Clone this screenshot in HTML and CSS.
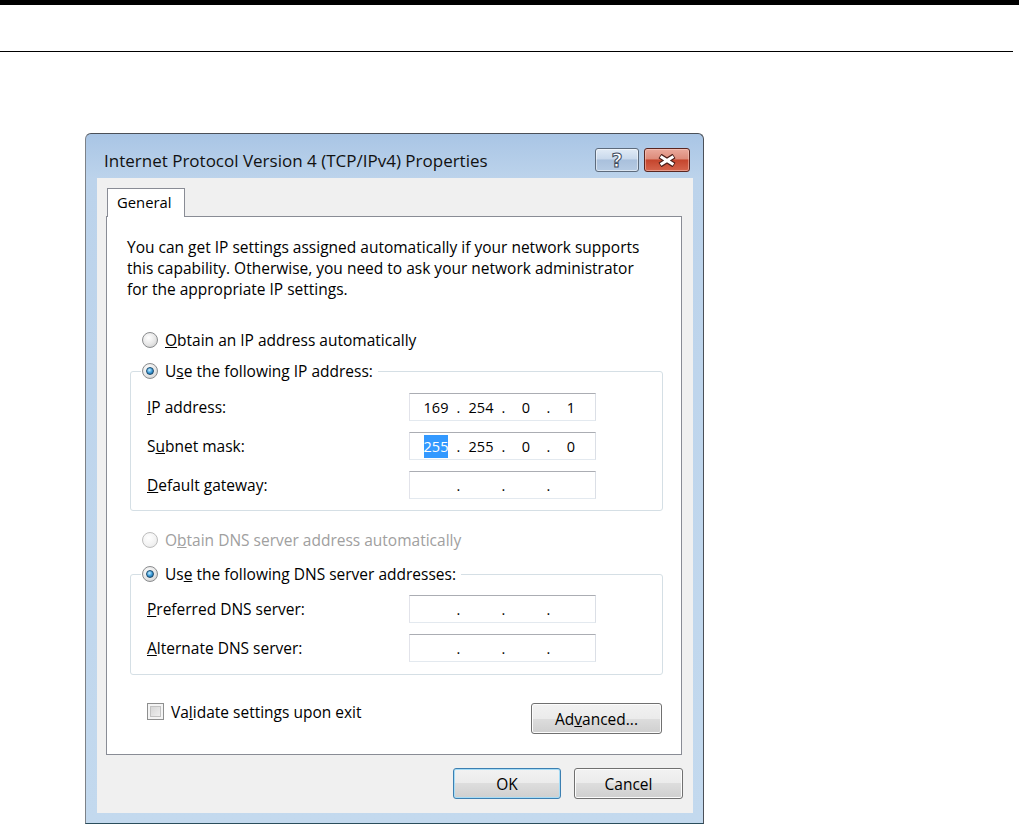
FILE: index.html
```html
<!DOCTYPE html>
<html lang="en">
<head>
    <meta charset="UTF-8">
    <title>Internet Protocol Version 4 (TCP/IPv4) Properties</title>
    <link rel="stylesheet" href="styles.css">
</head>
<body>

    <!-- Page header lines -->
    <div class="top-bar"></div>
    <div class="page-rule"></div>

    <!-- Dialog window -->
    <div class="window">
        <div class="title-bar">
            <span class="title">Internet Protocol Version 4 (TCP/IPv4) Properties</span>
            <div class="caption-btns">
                <button class="cap-btn help"><span class="help-mark">?</span></button>
                <button class="cap-btn close">
                    <svg width="20" height="13" viewBox="0 0 20 13">
                        <path d="M3 2 L17 11 M17 2 L3 11" stroke="#4a1d18" stroke-width="5.4" fill="none"/>
                        <path d="M3.6 2.4 L16.4 10.6 M16.4 2.4 L3.6 10.6" stroke="#fff" stroke-width="3" fill="none"/>
                    </svg>
                </button>
            </div>
        </div>

        <div class="client">
            <div class="tabs">
                <div class="tab">General</div>
            </div>

            <div class="panel">
                <p class="intro">You can get IP settings assigned automatically if your network supports<br>this capability. Otherwise, you need to ask your network administrator<br>for the appropriate IP settings.</p>

                <div class="option option-top"><span class="radio"></span><span><u>O</u>btain an IP address automatically</span></div>

                <!-- IP address group -->
                <fieldset class="group group-ip">
                    <legend><div class="option"><span class="radio checked"></span><span>U<u>s</u>e the following IP address:</span></div></legend>
                    <div class="fields">
                        <div class="field-row">
                            <label><u>I</u>P address:</label>
                            <div class="ip-box"><span class="seg">169</span><span class="dot">.</span><span class="seg">254</span><span class="dot">.</span><span class="seg">0</span><span class="dot">.</span><span class="seg">1</span></div>
                        </div>
                        <div class="field-row">
                            <label>S<u>u</u>bnet mask:</label>
                            <div class="ip-box"><span class="seg"><span class="selected">255</span></span><span class="dot">.</span><span class="seg">255</span><span class="dot">.</span><span class="seg">0</span><span class="dot">.</span><span class="seg">0</span></div>
                        </div>
                        <div class="field-row">
                            <label><u>D</u>efault gateway:</label>
                            <div class="ip-box"><span class="seg"></span><span class="dot">.</span><span class="seg"></span><span class="dot">.</span><span class="seg"></span><span class="dot">.</span><span class="seg"></span></div>
                        </div>
                    </div>
                </fieldset>

                <div class="option option-dns disabled"><span class="radio"></span><span>O<u>b</u>tain DNS server address automatically</span></div>

                <!-- DNS group -->
                <fieldset class="group group-dns">
                    <legend><div class="option"><span class="radio checked"></span><span>Us<u>e</u> the following DNS server addresses:</span></div></legend>
                    <div class="fields">
                        <div class="field-row">
                            <label><u>P</u>referred DNS server:</label>
                            <div class="ip-box"><span class="seg"></span><span class="dot">.</span><span class="seg"></span><span class="dot">.</span><span class="seg"></span><span class="dot">.</span><span class="seg"></span></div>
                        </div>
                        <div class="field-row">
                            <label><u>A</u>lternate DNS server:</label>
                            <div class="ip-box"><span class="seg"></span><span class="dot">.</span><span class="seg"></span><span class="dot">.</span><span class="seg"></span><span class="dot">.</span><span class="seg"></span></div>
                        </div>
                    </div>
                </fieldset>

                <div class="bottom-row">
                    <div class="check-option"><span class="checkbox"></span><span>Va<u>l</u>idate settings upon exit</span></div>
                    <button class="btn btn-advanced">Ad<u>v</u>anced...</button>
                </div>
            </div>

            <!-- Dialog buttons -->
            <div class="dialog-btns">
                <button class="btn btn-ok">OK</button>
                <button class="btn btn-cancel">Cancel</button>
            </div>
        </div>
    </div>

</body>
</html>
```

FILE: styles.css
```css
/* General Page Style */
body {
    margin: 0;
    width: 1019px;
    height: 824px;
    overflow: hidden;
    background: #fff;
    font-family: "Open Sans", "Noto Sans", "DejaVu Sans", sans-serif;
    font-size: 15.5px;
    color: #000;
}

.top-bar {
    height: 5px;
    background: #000;
}

.page-rule {
    width: 1013px;
    height: 1px;
    margin-top: 46px;
    background: #000;
}

/* Window frame */
.window {
    box-sizing: border-box;
    width: 619px;
    height: 691px;
    margin: 81px 0 0 85px;
    padding: 0 10px 10px 11px;
    display: flex;
    flex-direction: column;
    border: 1px solid #4b5058;
    border-left-color: #7d8288;
    border-bottom-color: #2a4d5c;
    border-radius: 6px 6px 0 0;
    background: linear-gradient(#a9c5e5, #bcd3eb 44px, #c3d9ee);
}

.title-bar {
    height: 44px;
    display: flex;
    align-items: flex-start;
    padding: 0 3px 0 7px;
}

.title {
    margin-top: 16px;
    line-height: 22px;
    font-size: 17px;
    color: #111;
}

.caption-btns {
    margin-left: auto;
    margin-top: 14px;
    display: flex;
    gap: 5px;
}

.cap-btn {
    height: 24px;
    box-sizing: border-box;
    padding: 0;
    border-radius: 3px;
    display: flex;
    align-items: center;
    justify-content: center;
}

.help {
    width: 44px;
    border: 1px solid #5d6b7c;
    background: linear-gradient(#e1ebf6 0%, #c9d9ec 45%, #a9c0dc 50%, #b6cbe3 100%);
    box-shadow: inset 0 0 0 1px rgba(255, 255, 255, 0.5);
}

.help-mark {
    font-family: "DejaVu Sans", sans-serif;
    font-weight: bold;
    font-size: 19px;
    line-height: 1;
    color: #fff;
    -webkit-text-stroke: 1px #3b4a5c;
}

.close {
    width: 46px;
    border: 1px solid #5a2620;
    background: linear-gradient(#eaa99c 0%, #dd8b7a 45%, #c5452d 50%, #d5654d 100%);
    box-shadow: inset 0 0 0 1px rgba(255, 220, 210, 0.45);
}

/* Client area */
.client {
    flex: 1;
    background: #f0f0f0;
    padding: 10px 11px 0 9px;
}

.tabs {
    display: flex;
    padding-left: 1px;
}

.tab {
    box-sizing: border-box;
    width: 78px;
    height: 29px;
    margin-bottom: -1px;
    padding: 3px 0 0 9px;
    line-height: 20px;
    font-size: 14.8px;
    border: 1px solid #898c95;
    border-bottom: none;
    background: #fff;
    position: relative;
    z-index: 1;
}

.panel {
    border: 1px solid #898c95;
    background: #fff;
    padding: 20px 18px 20px 20px;
}

.intro {
    margin: 0;
    line-height: 21px;
}

/* Radio options */
.option {
    display: flex;
    align-items: center;
    gap: 7px;
    height: 20px;
}

.option-top {
    margin: 30px 0 0 15px;
}

.option-dns {
    margin: 19px 0 0 15px;
}

.disabled {
    color: #a0a0a0;
}

.radio {
    width: 16px;
    height: 16px;
    box-sizing: border-box;
    flex: none;
    border-radius: 50%;
    border: 1px solid #8a8c8e;
    background: radial-gradient(circle at 40% 35%, #ffffff 0%, #e6e6e6 55%, #c4c4c4 100%);
    display: flex;
    align-items: center;
    justify-content: center;
}

.disabled .radio {
    border-color: #bdbdbd;
    background: radial-gradient(circle at 40% 35%, #ffffff 0%, #f2f2f2 60%, #e2e2e2 100%);
}

.radio.checked::after {
    content: "";
    width: 8px;
    height: 8px;
    box-sizing: border-box;
    border-radius: 50%;
    border: 1px solid #1b4a6d;
    background: radial-gradient(circle at 40% 35%, #c8eeff 0%, #3c9ddb 50%, #14507c 100%);
}

/* Group boxes */
.group {
    box-sizing: border-box;
    width: 533px;
    min-width: 0;
    padding: 0;
    border: 1px solid #d5dfe5;
    border-radius: 3px;
}

.group-ip {
    margin: 11px 0 0 3px;
}

.group-dns {
    margin: 14px 0 0 3px;
}

.group legend {
    margin-left: 10px;
    padding: 0 5px 0 1px;
}

.fields {
    display: flex;
    flex-direction: column;
    gap: 11px;
    padding: 12px 0 11px 16px;
}

.group-dns .fields {
    padding: 11px 0 12px 16px;
}

.field-row {
    display: flex;
    align-items: center;
    height: 28px;
}

.field-row label {
    width: 262px;
}

/* IP address boxes */
.ip-box {
    box-sizing: border-box;
    width: 187px;
    height: 28px;
    padding-left: 8px;
    display: flex;
    align-items: center;
    border: 1px solid;
    border-color: #abadb3 #dbdfe6 #e3e9ef #e2e3ea;
    background: #fff;
    font-size: 14.5px;
}

.seg {
    width: 36px;
    text-align: center;
}

.dot {
    width: 9px;
    text-align: center;
}

.selected {
    background: #3399ff;
    color: #fff;
    padding: 2px 0;
}

/* Bottom row */
.bottom-row {
    margin-top: 28px;
    display: flex;
    justify-content: space-between;
    align-items: flex-start;
}

.check-option {
    margin-left: 20px;
    display: flex;
    align-items: center;
    gap: 7px;
    height: 17px;
}

.checkbox {
    width: 17px;
    height: 17px;
    box-sizing: border-box;
    border: 1px solid #8e8f8f;
    background: linear-gradient(135deg, #cfcfcf, #f6f6f6);
    box-shadow: inset 0 0 0 2px #f4f4f4, inset 0 0 0 3px #c2c2c2;
}

/* Buttons */
.btn {
    height: 31px;
    box-sizing: border-box;
    padding: 0;
    border: 1px solid #707070;
    border-radius: 3px;
    background: linear-gradient(#f2f2f2 0%, #ebebeb 50%, #dddddd 50%, #cfcfcf 100%);
    box-shadow: inset 0 0 0 1px #fcfcfc;
    font: inherit;
    color: #000;
}

.btn-advanced {
    width: 131px;
    margin-right: 1px;
}

.dialog-btns {
    margin: 13px -1px 0 0;
    display: flex;
    justify-content: flex-end;
    gap: 13px;
}

.btn-ok {
    width: 108px;
    border-color: #3c7fb1;
    box-shadow: inset 0 0 0 1px #a6dcf6;
}

.btn-cancel {
    width: 109px;
}
```
